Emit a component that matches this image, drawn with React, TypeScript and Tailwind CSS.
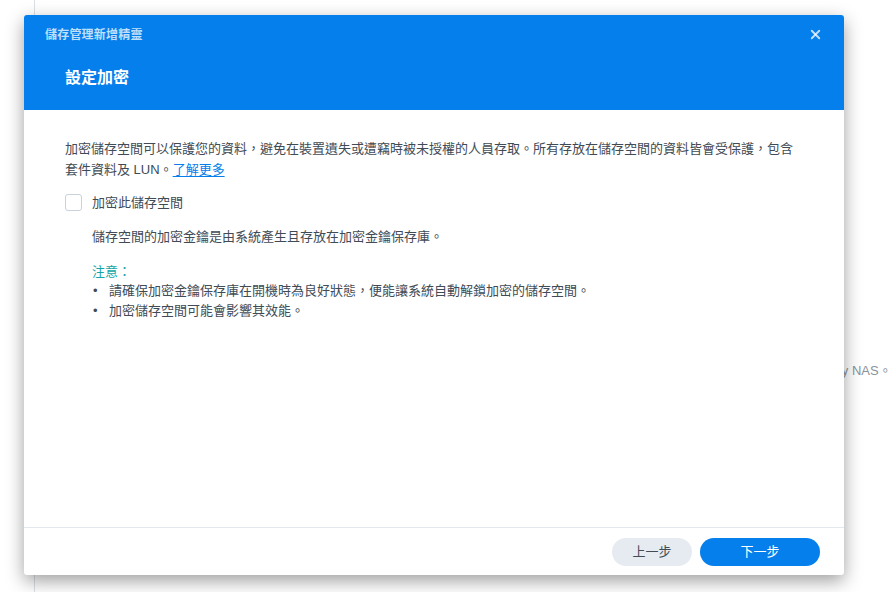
import React, { useState } from 'react';
import { X } from 'lucide-react';

const font = { fontFamily: '"Liberation Sans", "Noto Sans CJK TC", sans-serif' };

const App: React.FC = () => {
  const [encrypt, setEncrypt] = useState(false);

  return (
    <div className="relative w-[893px] h-[592px] overflow-hidden bg-white" style={font}>
      {/* page behind the wizard */}
      <div className="flex h-full">
        <div className="w-[35px] shrink-0 border-r border-[#dcdfe3]" />
        <div className="flex-1 pt-[362px] pl-[796px] text-[13px] leading-[18px] text-[#8a939d] whitespace-nowrap">
          my NAS。
        </div>
      </div>

      {/* wizard dialog */}
      <div className="absolute left-[24px] top-[15px] w-[820px] h-[560px] flex flex-col bg-white rounded-[3px] shadow-[0_6px_18px_rgba(0,0,0,0.38)] overflow-hidden">
        <div className="h-[95px] shrink-0 bg-[#057feb] flex flex-col">
          <div className="h-[38px] flex items-center justify-between pl-[21px] pr-[21px] pt-[1px]">
            <span className="text-[12px] font-semibold text-white/75 tracking-[0.2px]">儲存管理新增精靈</span>
            <button className="text-white/75">
              <X size={15} strokeWidth={3} />
            </button>
          </div>
          <div className="pl-[41px] pt-[14px] text-[16px] font-bold text-white leading-[22px]">設定加密</div>
        </div>

        <div className="flex-1 px-[41px] pt-[28px] text-[13px] leading-[21px] text-[#414b55]">
          <p>
            加密儲存空間可以保護您的資料，避免在裝置遺失或遭竊時被未授權的人員存取。所有存放在儲存空間的資料皆會受保護，包含套件資料及 LUN。
            <a className="text-[#057feb] underline underline-offset-2 cursor-pointer">了解更多</a>
          </p>

          <label className="mt-[12px] flex items-center gap-[10px] cursor-pointer">
            <span
              onClick={() => setEncrypt(!encrypt)}
              className={`w-[17px] h-[17px] rounded-[3px] border ${encrypt ? 'bg-[#057feb] border-[#057feb]' : 'border-[#c9d1db] bg-white'}`}
            />
            <span>加密此儲存空間</span>
          </label>

          <div className="pl-[27px] mt-[13px]">
            <p>儲存空間的加密金鑰是由系統產生且存放在加密金鑰保存庫。</p>
            <p className="mt-[14px] text-[#12a6a6]">注意：</p>
            <ul className="leading-[20px] -mt-[1px]">
              <li className="flex">
                <span className="w-[17px] pl-[1px] shrink-0">•</span>
                請確保加密金鑰保存庫在開機時為良好狀態，便能讓系統自動解鎖加密的儲存空間。
              </li>
              <li className="flex">
                <span className="w-[17px] pl-[1px] shrink-0">•</span>
                加密儲存空間可能會影響其效能。
              </li>
            </ul>
          </div>
        </div>

        <div className="h-[48px] shrink-0 border-t border-[#e3e8ee] flex items-center justify-end gap-[8px] pr-[24px]">
          <button className="w-[80px] h-[28px] rounded-full bg-[#e6ebf2] text-[13px] text-[#414b55]">上一步</button>
          <button className="w-[120px] h-[28px] rounded-full bg-[#057feb] text-[13px] text-white">下一步</button>
        </div>
      </div>
    </div>
  );
};

export default App;
